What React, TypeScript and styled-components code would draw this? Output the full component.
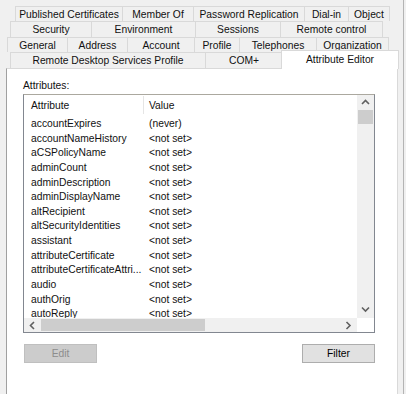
import React from 'react';
import styled, { createGlobalStyle } from 'styled-components';

const Global = createGlobalStyle`
  html, body { margin: 0; padding: 0; background: #f0f0f0; }
  body { width: 406px; height: 394px; overflow: hidden; }
`;

const Window = styled.div`
  width: 404px;
  height: 394px;
  border-right: 1px solid #b4b4b4;
  background: #f0f0f0;
  display: flex;
  flex-direction: column;
  padding-top: 6px;
  box-sizing: border-box;
  font-family: "Liberation Sans", Arial, sans-serif;
  font-size: 10.3px;
  color: #111;
  overflow: hidden;
`;

const TabRow = styled.div<{ $left: number; $height: number }>`
  display: flex;
  margin-left: ${(p) => p.$left}px;
  height: ${(p) => p.$height}px;
  flex-shrink: 0;
`;

const Tab = styled.div<{ $w: number; $first?: boolean; $selected?: boolean }>`
  width: ${(p) => p.$w}px;
  box-sizing: border-box;
  border-top: 1px solid #d9d9d9;
  border-right: 1px solid #d9d9d9;
  border-left: ${(p) => (p.$first || p.$selected ? '1px solid #d9d9d9' : 'none')};
  background: ${(p) => (p.$selected ? '#ffffff' : '#f0f0f0')};
  display: flex;
  align-items: ${(p) => (p.$selected ? 'flex-start' : 'center')};
  justify-content: center;
  white-space: nowrap;
  line-height: 13px;
  ${(p) =>
    p.$selected
      ? `
    position: relative;
    z-index: 2;
    height: 19px;
    margin-top: -2px;
    margin-left: -2px;
    padding-top: 2px;
    align-self: flex-start;
  `
      : ''}
`;

const Panel = styled.div`
  position: relative;
  z-index: 1;
  margin-left: 6px;
  width: 392px;
  flex: 1;
  box-sizing: border-box;
  background: #fff;
  border: 1px solid #d9d9d9;
  border-left-color: #a0a0a0;
  border-bottom: none;
  padding: 10px 22px 0 16px;
  display: flex;
  flex-direction: column;
`;

const Label = styled.div`
  line-height: 13px;
  height: 13px;
  margin-bottom: 2px;
`;

const ListBox = styled.div`
  width: 352px;
  height: 239px;
  box-sizing: border-box;
  border: 1px solid #828790;
  border-top-color: #aba89f;
  display: grid;
  grid-template-columns: 333px 17px;
  grid-template-rows: 223px 14px;
  background: #fff;
  overflow: hidden;
`;

const ListContent = styled.div`
  overflow: hidden;
  display: flex;
  flex-direction: column;
`;

const Header = styled.div`
  display: grid;
  grid-template-columns: 120px 1fr;
  height: 19px;
  flex-shrink: 0;
`;

const HeaderCell = styled.div<{ $pad: number; $divider?: boolean }>`
  padding-left: ${(p) => p.$pad}px;
  display: flex;
  align-items: center;
  border-right: ${(p) => (p.$divider ? '1px solid #e5e5e5' : 'none')};
  margin-top: 1px;
`;

const Rows = styled.div`
  padding-top: 3px;
  display: flex;
  flex-direction: column;
`;

const Row = styled.div`
  display: grid;
  grid-template-columns: 120px 1fr;
  height: 14.65px;
  line-height: 14.65px;
  flex-shrink: 0;
`;

const Cell = styled.div<{ $pad: number }>`
  padding-left: ${(p) => p.$pad}px;
  white-space: nowrap;
  overflow: hidden;
`;

const VScroll = styled.div`
  background: #f0f0f0;
  display: flex;
  flex-direction: column;
`;

const ArrowBtn = styled.div<{ $w: number; $h: number }>`
  width: ${(p) => p.$w}px;
  height: ${(p) => p.$h}px;
  display: flex;
  align-items: center;
  justify-content: center;
  flex-shrink: 0;
`;

const VThumb = styled.div`
  margin: 0 1px;
  height: 14px;
  background: #cdcdcd;
`;

const Spacer = styled.div`
  flex: 1;
`;

const HScroll = styled.div`
  background: #f0f0f0;
  display: flex;
  align-items: stretch;
`;

const HThumb = styled.div`
  width: 164px;
  margin: 1px 0;
  background: #cdcdcd;
`;

const Corner = styled.div`
  background: #fff;
`;

const ButtonRow = styled.div`
  display: flex;
  justify-content: space-between;
  width: 352px;
  margin-top: 11px;
`;

const Button = styled.div<{ $disabled?: boolean }>`
  width: 73px;
  height: 19px;
  box-sizing: border-box;
  margin-left: ${(p) => (p.$disabled ? '1px' : '0')};
  background: ${(p) => (p.$disabled ? '#cccccc' : '#e1e1e1')};
  border: 1px solid ${(p) => (p.$disabled ? '#bfbfbf' : '#adadad')};
  color: ${(p) => (p.$disabled ? '#8d8d8d' : '#000')};
  display: flex;
  align-items: center;
  justify-content: center;
`;

const Chevron = ({ dir }: { dir: 'up' | 'down' | 'left' | 'right' }) => {
  const pts: Record<string, string> = {
    up: '1,5 4.5,1.5 8,5',
    down: '1,1.5 4.5,5 8,1.5',
    left: '5,1 1.5,4.5 5,8',
    right: '1.5,1 5,4.5 1.5,8',
  };
  const vertical = dir === 'up' || dir === 'down';
  return (
    <svg width={vertical ? 9 : 7} height={vertical ? 7 : 9} viewBox={vertical ? '0 0 9 7' : '0 0 7 9'}>
      <polyline points={pts[dir]} fill="none" stroke="#606060" strokeWidth="1.6" />
    </svg>
  );
};

const tabRows: { left: number; height: number; tabs: [string, number][] }[] = [
  {
    left: 15,
    height: 15,
    tabs: [
      ['Published Certificates', 108],
      ['Member Of', 71],
      ['Password Replication', 111],
      ['Dial-in', 44],
      ['Object', 41],
    ],
  },
  {
    left: 10,
    height: 16,
    tabs: [
      ['Security', 82],
      ['Environment', 104],
      ['Sessions', 85],
      ['Remote control', 102],
    ],
  },
  {
    left: 7,
    height: 15,
    tabs: [
      ['General', 61],
      ['Address', 60],
      ['Account', 67],
      ['Profile', 45],
      ['Telephones', 77],
      ['Organization', 72],
    ],
  },
];

const attributes: [string, string][] = [
  ['accountExpires', '(never)'],
  ['accountNameHistory', '<not set>'],
  ['aCSPolicyName', '<not set>'],
  ['adminCount', '<not set>'],
  ['adminDescription', '<not set>'],
  ['adminDisplayName', '<not set>'],
  ['altRecipient', '<not set>'],
  ['altSecurityIdentities', '<not set>'],
  ['assistant', '<not set>'],
  ['attributeCertificate', '<not set>'],
  ['attributeCertificateAttri...', '<not set>'],
  ['audio', '<not set>'],
  ['authOrig', '<not set>'],
  ['autoReply', '<not set>'],
];

export default function App() {
  return (
    <>
      <Global />
      <Window>
        {tabRows.map((r, i) => (
          <TabRow key={i} $left={r.left} $height={r.height}>
            {r.tabs.map(([t, w], j) => (
              <Tab key={t} $w={w} $first={j === 0}>
                {t}
              </Tab>
            ))}
          </TabRow>
        ))}
        <TabRow $left={10} $height={16}>
          <Tab $w={196} $first>
            Remote Desktop Services Profile
          </Tab>
          <Tab $w={77}>COM+</Tab>
          <Tab $w={118} $selected>
            Attribute Editor
          </Tab>
        </TabRow>
        <Panel>
          <Label>Attributes:</Label>
          <ListBox>
            <ListContent>
              <Header>
                <HeaderCell $pad={7} $divider>
                  Attribute
                </HeaderCell>
                <HeaderCell $pad={5}>Value</HeaderCell>
              </Header>
              <Rows>
                {attributes.map(([a, v]) => (
                  <Row key={a}>
                    <Cell $pad={7}>{a}</Cell>
                    <Cell $pad={5}>{v}</Cell>
                  </Row>
                ))}
              </Rows>
            </ListContent>
            <VScroll>
              <ArrowBtn $w={17} $h={15}>
                <Chevron dir="up" />
              </ArrowBtn>
              <VThumb />
              <Spacer />
              <ArrowBtn $w={17} $h={17}>
                <Chevron dir="down" />
              </ArrowBtn>
            </VScroll>
            <HScroll>
              <ArrowBtn $w={17} $h={14}>
                <Chevron dir="left" />
              </ArrowBtn>
              <HThumb />
              <Spacer />
              <ArrowBtn $w={17} $h={14}>
                <Chevron dir="right" />
              </ArrowBtn>
            </HScroll>
            <Corner />
          </ListBox>
          <ButtonRow>
            <Button $disabled>Edit</Button>
            <Button>Filter</Button>
          </ButtonRow>
        </Panel>
      </Window>
    </>
  );
}
